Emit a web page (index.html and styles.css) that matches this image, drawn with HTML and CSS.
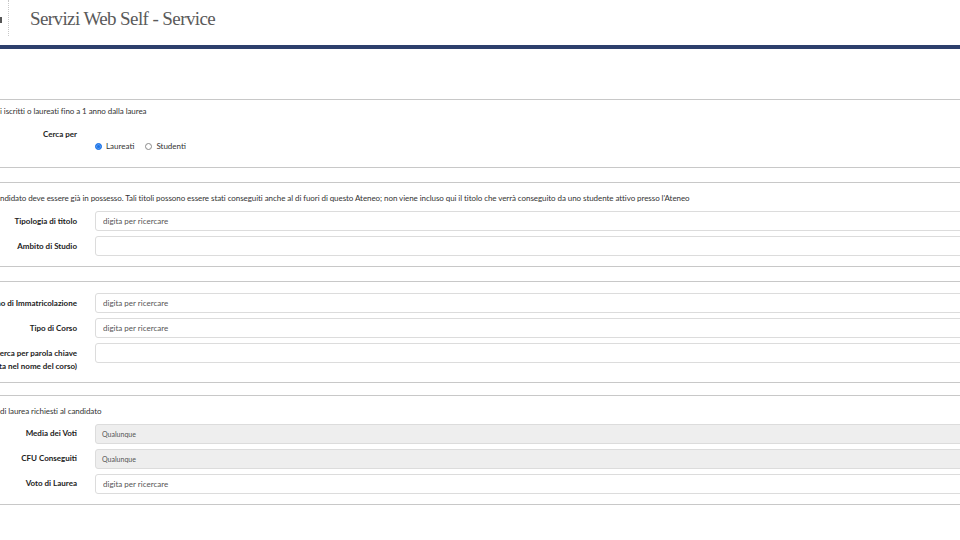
FILE: index.html
```html
<!DOCTYPE html>
<html lang="it">
<head>
  <meta charset="UTF-8">
  <meta name="viewport" content="width=device-width, initial-scale=1.0">
  <title>Servizi Web Self - Service</title>
  <link rel="stylesheet" href="styles.css">
</head>
<body>
  <header class="header">
    <div class="header-logo"><span class="logo-mark"></span></div>
    <div class="header-title">Servizi Web Self - Service</div>
  </header>
  <div class="header-bar"></div>

  <form class="main">
    <fieldset class="section section-first">
      <div class="note">i iscritti o laureati fino a 1 anno dalla laurea</div>
      <div class="row row-radio">
        <label class="row-label">Cerca per</label>
        <div class="radio-group">
          <label class="radio"><input type="radio" name="cerca" checked> Laureati</label>
          <label class="radio"><input type="radio" name="cerca"> Studenti</label>
        </div>
      </div>
    </fieldset>

    <fieldset class="section">
      <div class="note">ndidato deve essere già in possesso. Tali titoli possono essere stati conseguiti anche al di fuori di questo Ateneo; non viene incluso qui il titolo che verrà conseguito da uno studente attivo presso l'Ateneo</div>
      <div class="row">
        <label class="row-label">Tipologia di titolo</label>
        <input class="field" type="text" placeholder="digita per ricercare">
      </div>
      <div class="row">
        <label class="row-label">Ambito di Studio</label>
        <input class="field" type="text">
      </div>
    </fieldset>

    <fieldset class="section section-plain">
      <div class="row">
        <label class="row-label">Anno di Immatricolazione</label>
        <input class="field" type="text" placeholder="digita per ricercare">
      </div>
      <div class="row">
        <label class="row-label">Tipo di Corso</label>
        <input class="field" type="text" placeholder="digita per ricercare">
      </div>
      <div class="row">
        <label class="row-label">Cerca per parola chiave<br>(contenuta nel nome del corso)</label>
        <input class="field" type="text">
      </div>
    </fieldset>

    <fieldset class="section">
      <div class="note">di laurea richiesti al candidato</div>
      <div class="row">
        <label class="row-label">Media dei Voti</label>
        <div class="field field-select">Qualunque</div>
      </div>
      <div class="row">
        <label class="row-label">CFU Conseguiti</label>
        <div class="field field-select">Qualunque</div>
      </div>
      <div class="row">
        <label class="row-label">Voto di Laurea</label>
        <input class="field" type="text" placeholder="digita per ricercare">
      </div>
    </fieldset>
  </form>
</body>
</html>
```

FILE: styles.css
```css
body {
  margin: 0;
  overflow: hidden;
  background-color: #fff;
  color: #222;
  font-family: Lato, "Open Sans", sans-serif;
  font-size: 8px;
}

/* header */
.header {
  display: flex;
  align-items: flex-start;
  height: 45px;
}

.header-logo {
  width: 8px;
  height: 36px;
  border-right: 1px dotted #c8c8c8;
  position: relative;
}

.logo-mark {
  position: absolute;
  left: 0;
  top: 17px;
  width: 2px;
  height: 6px;
  background-color: #555;
}

.header-title {
  margin: 8px 0 0 21px;
  font-family: "Liberation Serif", "DejaVu Serif", serif;
  font-size: 19px;
  letter-spacing: -0.6px;
  color: #5a5a5a;
}

.header-bar {
  height: 4px;
  background-color: #2d3f6c;
}

/* form, scrolled a little to the right */
.main {
  margin: 50px 0 0 -60px;
  width: 1120px;
}

.section {
  margin: 0 0 14px;
  padding: 10px 0 10px;
  min-width: 0;
  border: 1px solid #c8c8c8;
}

.section-first {
  padding-top: 6px;
  padding-bottom: 15px;
}

.section-plain {
  padding-top: 11px;
  padding-bottom: 9px;
  margin-bottom: 12px;
}

.note {
  padding-left: 59px;
  line-height: 11px;
  margin-bottom: 7px;
  letter-spacing: -0.07px;
  color: #333;
  white-space: nowrap;
}

.section-first .note {
  margin-bottom: 12px;
}

.row {
  display: grid;
  grid-template-columns: 136px 1fr;
  column-gap: 18px;
  margin-bottom: 5px;
}

.row:last-child {
  margin-bottom: 0;
}

.row-label {
  text-align: right;
  font-weight: bold;
  line-height: 13px;
  padding-top: 3.5px;
  color: #222;
  white-space: nowrap;
}

.row-radio .row-label {
  padding-top: 0;
  line-height: 11px;
}

.radio-group {
  display: flex;
  gap: 11px;
  padding-top: 12px;
  line-height: 11px;
  color: #333;
}

.radio {
  display: flex;
  align-items: center;
  gap: 4px;
}

.radio input {
  appearance: none;
  margin: 0;
  width: 7px;
  height: 7px;
  border: 1px solid #8a8a8a;
  border-radius: 50%;
  background-color: #fff;
}

.radio input:checked {
  border-color: #1a73e8;
  background-color: #1a73e8;
  box-shadow: inset 0 0 0 1px #5b9cf0;
}

.field {
  box-sizing: border-box;
  height: 20px;
  margin: 0;
  padding: 0 7px;
  border: 1px solid #dcdcdc;
  border-radius: 3px;
  background-color: #fff;
  font-family: Lato, "Open Sans", sans-serif;
  font-size: 8px;
  color: #333;
  outline: none;
}

.field::placeholder {
  color: #555;
}

.field-select {
  display: flex;
  align-items: center;
  padding-left: 6px;
  background-color: #eee;
  font-size: 7px;
  color: #555;
}
```
